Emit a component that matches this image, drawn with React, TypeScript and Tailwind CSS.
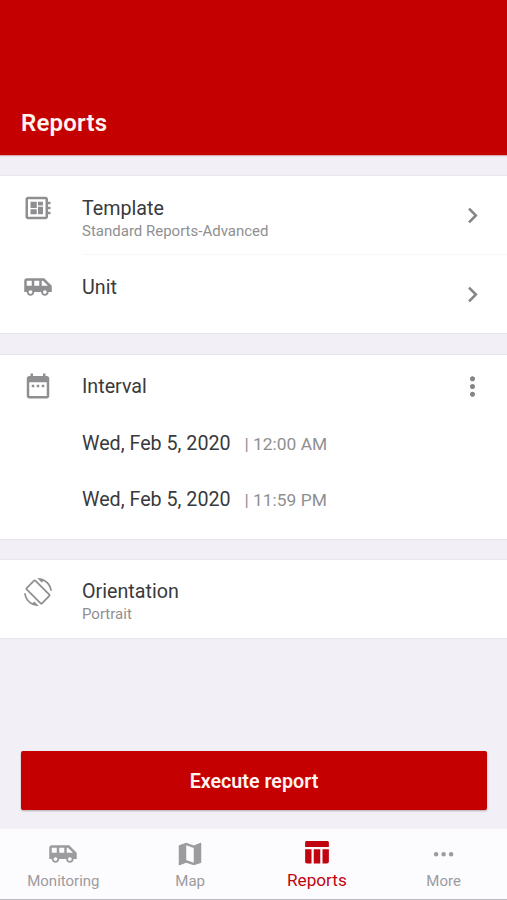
import type { ReactNode } from 'react';

function Icon({ d, className }: { d: string; className: string }) {
  return (
    <svg viewBox="0 0 24 24" fill="currentColor" className={className}>
      <path d={d} />
    </svg>
  );
}

const icons = {
  template:
    'M22 9V7h-2V5c0-1.1-.9-2-2-2H4c-1.1 0-2 .9-2 2v14c0 1.1.9 2 2 2h14c1.1 0 2-.9 2-2v-2h2v-2h-2v-2h2v-2h-2V9h2zm-4 10H4V5h14v14zM6 13h5v4H6zm6-6h4v3h-4zM6 7h5v5H6zm6 4h4v6h-4z',
  bus: 'M17 5H3a2 2 0 0 0-2 2v9h2c0 1.65 1.34 3 3 3s3-1.35 3-3h5.5c0 1.65 1.34 3 3 3s3-1.35 3-3H23v-5l-6-6zM3 11V7h4v4H3zm3 6.5c-.83 0-1.5-.67-1.5-1.5s.67-1.5 1.5-1.5 1.5.67 1.5 1.5-.67 1.5-1.5 1.5zm7-6.5H9V7h4v4zm4.5 6.5c-.83 0-1.5-.67-1.5-1.5s.67-1.5 1.5-1.5 1.5.67 1.5 1.5-.67 1.5-1.5 1.5zM15 11V7h1l4 4h-5z',
  calendar:
    'M9 11H7v2h2v-2zm4 0h-2v2h2v-2zm4 0h-2v2h2v-2zm2-7h-1V2h-2v2H8V2H6v2H5c-1.11 0-1.99.9-1.99 2L3 20c0 1.1.89 2 2 2h14c1.1 0 2-.9 2-2V6c0-1.1-.9-2-2-2zm0 16H5V9h14v11z',
  rotate:
    'M16.48 2.52c3.27 1.55 5.61 4.72 5.97 8.48h1.5C23.44 4.84 18.29 0 12 0l-.66.03 3.81 3.81 1.33-1.32zm-6.25-.77c-.59-.59-1.54-.59-2.12 0L1.75 8.11c-.59.59-.59 1.54 0 2.12l12.02 12.02c.59.59 1.54.59 2.12 0l6.36-6.36c.59-.59.59-1.54 0-2.12L10.23 1.75zm4.6 19.44L2.81 9.17l6.36-6.36 12.02 12.02-6.36 6.36zm-7.31.29C4.25 19.94 1.91 16.76 1.55 13H.05C.56 19.16 5.71 24 12 24l.66-.03-3.81-3.81-1.33 1.32z',
  map: 'M20.5 3l-.16.03L15 5.1 9 3 3.36 4.9c-.21.07-.36.25-.36.48V20.5c0 .28.22.5.5.5l.16-.03L9 18.9l6 2.1 5.64-1.9c.21-.07.36-.25.36-.48V3.5c0-.28-.22-.5-.5-.5zM15 19l-6-2.11V5l6 2.11V19z',
  reports:
    'M2.5 4.4c0-.7.5-1.2 1.2-1.2h16.6c.7 0 1.2.5 1.2 1.2V8h-19zM2.5 9.7h5.1v11.5H4.1c-.9 0-1.6-.7-1.6-1.6zM9.4 9.7h5.2v11.5H9.4zM16.4 9.7h5.1v9.9c0 .9-.7 1.6-1.6 1.6h-3.5z',
  more: 'M5.7 10.4a1.8 1.8 0 1 0 0 3.6 1.8 1.8 0 0 0 0-3.6zm6 0a1.8 1.8 0 1 0 0 3.6 1.8 1.8 0 0 0 0-3.6zm6 0a1.8 1.8 0 1 0 0 3.6 1.8 1.8 0 0 0 0-3.6z',
  chevron: 'M8.59 16.59L13.17 12 8.59 7.41 10 6l6 6-6 6z',
  dots: 'M12 8c1.1 0 2-.9 2-2s-.9-2-2-2-2 .9-2 2 .9 2 2 2zm0 2c-1.1 0-2 .9-2 2s.9 2 2 2 2-.9 2-2-.9-2-2-2zm0 6c-1.1 0-2 .9-2 2s.9 2 2 2 2-.9 2-2-.9-2-2-2z',
};

const tabs = [
  { label: 'Monitoring', icon: icons.bus },
  { label: 'Map', icon: icons.map },
  { label: 'Reports', icon: icons.reports, active: true },
  { label: 'More', icon: icons.more },
];

const dates = [
  { day: 'Wed, Feb 5, 2020', time: '12:00 AM' },
  { day: 'Wed, Feb 5, 2020', time: '11:59 PM' },
];

type RowProps = {
  icon: string;
  iconClass?: string;
  title: string;
  subtitle?: string;
  action?: ReactNode;
};

function Row({ icon, iconClass = 'size-[30px]', title, subtitle, action }: RowProps) {
  return (
    <div className="flex items-start">
      <div className="flex w-[75px] shrink-0 justify-center">
        <Icon d={icon} className={`${iconClass} text-[#8f8f92]`} />
      </div>
      <div className="flex-1 pt-[3px] pl-[7px]">
        <div className="text-[19.7px] leading-[26px] text-[#3a3a3c]">{title}</div>
        {subtitle && <div className="-mt-px text-[15px] leading-[20px] text-[#8f8f92]">{subtitle}</div>}
      </div>
      {action}
    </div>
  );
}

const chevron = <Icon d={icons.chevron} className="mt-[7px] mr-[19px] size-[31px] text-[#858587]" />;

export default function App() {
  return (
    <div className="flex h-[900px] w-[507px] flex-col overflow-hidden bg-[#f2eff6] font-['Roboto',sans-serif]">
      <header className="flex h-[155px] shrink-0 items-end bg-[#c40000] px-[21px] pb-[16px] shadow-[0_1px_1px_rgba(160,0,0,0.3)]">
        <h1 className="text-[24px] leading-[32px] font-semibold tracking-[0.2px] text-[#fff3f0]">Reports</h1>
      </header>

      <section className="mt-[21px] h-[157px] shrink-0 bg-white shadow-[0_0_1px_1px_#e9e6ed]">
        <div className="h-[79px] pt-[17px]">
          <Row icon={icons.template} title="Template" subtitle="Standard Reports-Advanced" action={chevron} />
        </div>
        <div className="ml-[82px] h-px bg-[#f7f7f8] -mt-px" />
        <div className="pt-[17px]">
          <Row icon={icons.bus} title="Unit" action={chevron} />
        </div>
      </section>

      <section className="mt-[22px] h-[184px] shrink-0 bg-white pt-4 shadow-[0_0_1px_1px_#e9e6ed]">
        <Row
          icon={icons.calendar}
          title="Interval"
          action={<Icon d={icons.dots} className="mr-[19px] size-[31px] text-[#858587]" />}
        />
        <div className="flex flex-col gap-[30px] pt-[29px] pl-[82px]">
          {dates.map((d) => (
            <div key={d.time} className="flex h-[26px] items-baseline leading-[26px]">
              <span className="w-[162.5px] text-[19.7px] text-[#3a3a3c]">{d.day}</span>
              <span className="text-[17.4px] text-[#8f8f92]">| {d.time}</span>
            </div>
          ))}
        </div>
      </section>

      <section className="mt-[21px] h-[78px] shrink-0 bg-white pt-[16px] shadow-[0_0_1px_1px_#e9e6ed]">
        <Row icon={icons.rotate} iconClass="mt-[2px] size-[28px]" title="Orientation" subtitle="Portrait" />
      </section>

      <div className="mt-auto pr-[20px] pb-[19px] pl-[21px]">
        <button className="h-[59px] w-full rounded-[2px] bg-[#c40000] pt-[3px] text-[19.7px] font-semibold text-[#fff3f0] shadow-[0_1px_2px_rgba(90,60,80,0.4)]">
          Execute report
        </button>
      </div>

      <nav className="grid h-[71px] shrink-0 grid-cols-4 border-b border-[#bdbcc0] bg-[#fcfbfd]">
        {tabs.map((tab) => (
          <div
            key={tab.label}
            className={
              tab.active
                ? 'flex flex-col items-center pt-[8px] text-[#c00510]'
                : 'flex flex-col items-center pt-[10px] text-[#9c9c9f]'
            }
          >
            <Icon d={tab.icon} className="size-[30px]" />
            <span className={tab.active ? 'text-[17.2px] leading-[26px]' : 'text-[15px] leading-[25px]'}>
              {tab.label}
            </span>
          </div>
        ))}
      </nav>
    </div>
  );
}
